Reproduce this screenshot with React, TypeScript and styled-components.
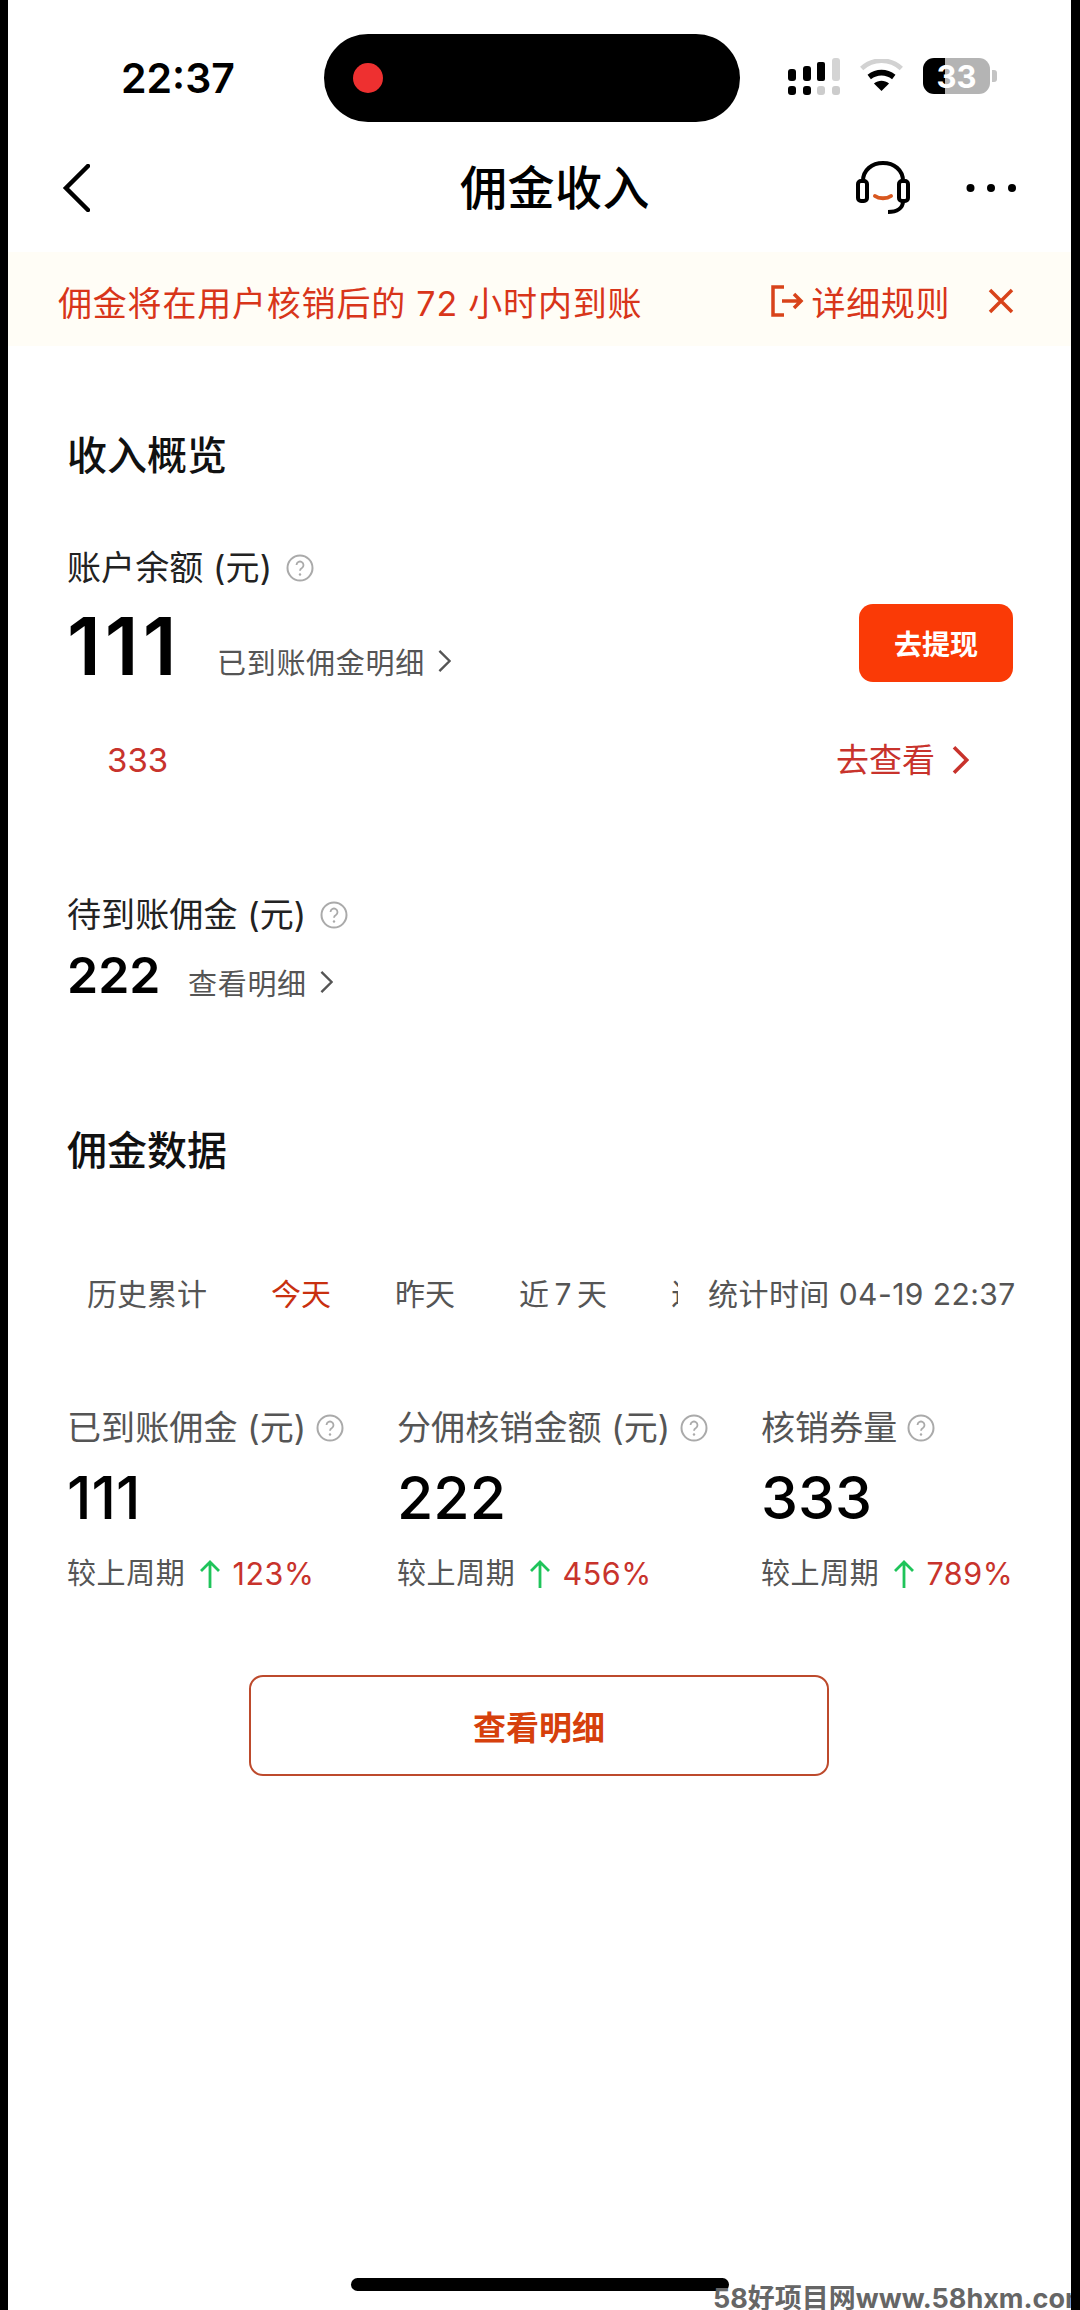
import React from 'react'
import styled, { createGlobalStyle } from 'styled-components'

const FONT = `Inter, "Noto Sans CJK SC", sans-serif`

const GlobalStyle = createGlobalStyle`
  html, body {
    margin: 0;
    padding: 0;
    background: #000;
  }
  body {
    font-family: ${FONT};
  }
`

const Phone = styled.div`
  position: relative;
  box-sizing: border-box;
  width: 1063px;
  height: 2310px;
  margin-left: 8px;
  background: #fff;
  overflow: hidden;
`

const StatusBar = styled.div`
  display: flex;
  align-items: center;
  height: 88px;
  padding: 34px 0 0 113px;
`

const Clock = styled.div`
  width: 203px;
  font-size: 41px;
  font-weight: 600;
  color: #000;
`

const Island = styled.div`
  display: flex;
  align-items: center;
  box-sizing: border-box;
  width: 416px;
  height: 88px;
  padding-left: 29px;
  border-radius: 44px;
  background: #000;
`

const RecordDot = styled.span`
  width: 30px;
  height: 30px;
  border-radius: 50%;
  background: #ee3030;
`

const StatusIcons = styled.div`
  display: flex;
  align-items: center;
  margin: -4px 0 0 48px;
  gap: 19px;
`

const Battery = styled.div`
  display: flex;
  align-items: center;
  justify-content: center;
  width: 67px;
  height: 36px;
  border-radius: 11px;
  background: linear-gradient(90deg, #000 33%, #b4b4b4 33%);
  color: #fff;
  font-size: 31px;
  font-weight: 700;
`

const BatteryTip = styled.span`
  width: 5px;
  height: 12px;
  margin-left: -17px;
  border-radius: 0 3px 3px 0;
  background: #c4c4c4;
`

const NavBar = styled.div`
  display: grid;
  grid-template-columns: 398px auto 1fr;
  align-items: center;
  height: 100px;
  margin-top: 16px;
  padding: 0 55px 0 54px;
`

const NavTitle = styled.div`
  font-size: 47px;
  font-weight: 500;
  line-height: 96px;
  letter-spacing: 0.5px;
  color: #000;
`

const NavActions = styled.div`
  display: flex;
  justify-content: flex-end;
  align-items: center;
  gap: 55px;
`

const Notice = styled.div`
  display: flex;
  align-items: center;
  box-sizing: border-box;
  height: 94px;
  margin-top: 14px;
  padding: 4px 57px 0 50px;
  background: #fffdf6;
  color: #d8351a;
  font-size: 34px;
`

const NoticeText = styled.div`
  flex: 1;
  letter-spacing: 0.8px;
`

const RuleLink = styled.div`
  display: flex;
  align-items: center;
  gap: 8px;
  margin-right: 38px;
  letter-spacing: 0.6px;
`

const Body = styled.div`
  padding: 0 58px 0 59px;
`

const SectionTitle = styled.h2<{ $top: number }>`
  margin: ${({ $top }) => $top}px 0 0;
  font-size: 40px;
  font-weight: 500;
  line-height: 56px;
  color: #111;
`

const LabelRow = styled.div<{ $top: number }>`
  display: flex;
  align-items: center;
  gap: 14px;
  margin-top: ${({ $top }) => $top}px;
  font-size: 34px;
  line-height: 46px;
  letter-spacing: 0.1px;
  color: #222;
`

const BalanceRow = styled.div`
  display: flex;
  align-items: center;
  height: 86px;
  margin-top: 11px;
`

const BigAmount = styled.div`
  width: 150px;
  font-size: 80px;
  font-weight: 600;
  letter-spacing: 4px;
  color: #000;
`

const SubLink = styled.div<{ $top: number }>`
  display: flex;
  align-items: center;
  gap: 12px;
  margin-top: ${({ $top }) => $top}px;
  font-size: 29px;
  letter-spacing: 0.7px;
  color: #555;
`

const WithdrawButton = styled.button`
  width: 154px;
  height: 78px;
  margin: -4px 0 0 auto;
  border: 0;
  border-radius: 14px;
  background: #fa3a06;
  color: #fff;
  font-family: ${FONT};
  font-size: 28px;
  font-weight: 700;
`

const RewardRow = styled.div`
  display: flex;
  align-items: center;
  justify-content: space-between;
  margin-top: 49px;
  padding: 0 44px 0 40px;
  color: #c8332c;
  font-size: 33px;
  line-height: 46px;
`

const RewardLink = styled.div`
  display: flex;
  align-items: center;
  gap: 16px;
`

const PendingRow = styled.div`
  display: flex;
  align-items: center;
  height: 60px;
  margin-top: 7px;
`

const MidAmount = styled.div`
  width: 121px;
  font-size: 50px;
  font-weight: 600;
  color: #000;
`

const TabsRow = styled.div`
  display: flex;
  align-items: center;
  height: 50px;
  margin-top: 88px;
  font-size: 30px;
  color: #555;
`

const TabStrip = styled.div`
  flex: none;
  display: flex;
  box-sizing: border-box;
  width: 611px;
  padding-left: 20px;
  overflow: hidden;
  white-space: nowrap;
  gap: 64px;
`

const Tab = styled.span<{ $active?: boolean }>`
  flex: none;
  color: ${({ $active }) => ($active ? '#c8300f' : '#555')};
`

const StatTime = styled.div`
  flex: none;
  margin-left: 30px;
  letter-spacing: 0.45px;
  white-space: nowrap;
`

const StatsGrid = styled.div`
  display: grid;
  grid-template-columns: 330px 364px 1fr;
  margin-top: 88px;
`

const StatLabel = styled.div`
  display: flex;
  align-items: center;
  gap: 10px;
  font-size: 34px;
  line-height: 46px;
  letter-spacing: 0.1px;
  color: #555;
  white-space: nowrap;
`

const StatValue = styled.div`
  margin-top: 9px;
  font-size: 59px;
  line-height: 76px;
  font-weight: 500;
  color: #000;
`

const Compare = styled.div`
  display: flex;
  align-items: center;
  gap: 14px;
  margin-top: 16px;
  font-size: 29px;
  line-height: 44px;
  letter-spacing: 0.6px;
  color: #555;
  white-space: nowrap;
`

const Delta = styled.span`
  margin-left: -3px;
  color: #c8332c;
  font-size: 30.5px;
`

const DetailButton = styled.button`
  display: block;
  width: 580px;
  height: 101px;
  margin: 79px 0 0 182px;
  border: 2px solid #bd4a2c;
  border-radius: 14px;
  background: #fff;
  color: #d6400c;
  font-family: ${FONT};
  font-size: 33px;
  font-weight: 700;
`

const HomeBar = styled.div`
  position: absolute;
  left: 343px;
  bottom: 19px;
  width: 378px;
  height: 13px;
  border-radius: 7px;
  background: #000;
`

const Watermark = styled.div`
  position: absolute;
  left: 705px;
  bottom: -5px;
  white-space: nowrap;
  font-size: 27px;
  line-height: 32px;
  font-weight: 700;
  color: #666;
`

const Help = () => (
  <svg width="28" height="28" viewBox="0 0 28 28" fill="none">
    <circle cx="14" cy="14" r="12.5" stroke="#aaa" strokeWidth="2" />
    <path d="M10.5 11a3.5 3.5 0 1 1 5.4 3c-1.3.8-1.9 1.400-1.900 2.800" stroke="#aaa" strokeWidth="1.800" />
    <circle cx="14" cy="20.500" r="1.200" fill="#aaa" />
  </svg>
)

const Chevron = ({ size, color, width = 2 }: { size: number; color: string; width?: number }) => (
  <svg width={size * 0.6} height={size} viewBox="0 0 12 20" fill="none">
    <path d="M2 1.500 10.500 10 2 18.500" stroke={color} strokeWidth={width} />
  </svg>
)

const UpArrow = () => (
  <svg width="22" height="30" viewBox="0 0 22 30" fill="none">
    <path d="M11 29V3M2 12l9-9 9 9" stroke="#1fc45a" strokeWidth="2.800" />
  </svg>
)

const stats = [
  { label: '已到账佣金 (元)', value: '111', delta: '123%' },
  { label: '分佣核销金额 (元)', value: '222', delta: '456%' },
  { label: '核销券量', value: '333', delta: '789%' },
]

const tabs = ['历史累计', '今天', '昨天', '近\u20097\u2009天', '近30天']

export default function App() {
  return (
    <>
      <GlobalStyle />
      <Phone>
        <StatusBar>
          <Clock>22:37</Clock>
          <Island>
            <RecordDot />
          </Island>
          <StatusIcons>
            <svg width="52" height="37" viewBox="0 0 52 37">
              <rect x="0" y="11" width="8" height="12" rx="3" fill="#000" />
              <rect x="15" y="8" width="8" height="15" rx="3" fill="#000" />
              <rect x="29" y="4" width="8" height="19" rx="2" fill="#000" />
              <rect x="44" y="0" width="8" height="23" rx="3" fill="#d4d4d4" />
              <rect x="0" y="28" width="8" height="9" rx="3" fill="#000" />
              <rect x="15" y="28" width="8" height="9" rx="3" fill="#000" />
              <rect x="29" y="28" width="8" height="9" rx="3" fill="#ccc" />
              <rect x="44" y="28" width="8" height="9" rx="3" fill="#ccc" />
            </svg>
            <svg width="45" height="34" viewBox="0 0 46 36" fill="none">
              <path d="M2 10C14-1 32-1 44 10" stroke="#d2d2d2" strokeWidth="5" />
              <path d="M10 19c8-6 18-6 26 0" stroke="#000" strokeWidth="6" />
              <path d="M15 26c5-4 11-4 16 0l-8 8z" fill="#000" />
            </svg>
            <Battery>33</Battery>
            <BatteryTip />
          </StatusIcons>
        </StatusBar>
        <NavBar>
          <svg width="28" height="48" viewBox="0 0 28 48" fill="none">
            <path d="M26 2 4 24l22 22" stroke="#000" strokeWidth="4.500" strokeLinecap="round" />
          </svg>
          <NavTitle>佣金收入</NavTitle>
          <NavActions>
            <svg width="56" height="54" viewBox="0 0 56 54" fill="none">
              <path d="M8 20C8 9 17 2 28 2s20 7 20 18" stroke="#000" strokeWidth="4" />
              <rect x="3" y="20" width="9" height="20" rx="3" stroke="#000" strokeWidth="4" />
              <rect x="44" y="20" width="9" height="20" rx="3" stroke="#000" strokeWidth="4" />
              <path d="M48 40c0 7-6 11-15 11" stroke="#000" strokeWidth="4" />
              <path d="M20 35c4 3 12 3 16 0" stroke="#d8571f" strokeWidth="4" strokeLinecap="round" />
            </svg>
            <svg width="50" height="10" viewBox="0 0 50 10">
              <circle cx="4.500" cy="5" r="4" fill="#000" />
              <circle cx="25" cy="5" r="4" fill="#000" />
              <circle cx="46" cy="5" r="4" fill="#000" />
            </svg>
          </NavActions>
        </NavBar>
        <Notice>
          <NoticeText>佣金将在用户核销后的 72 小时内到账</NoticeText>
          <RuleLink>
            <svg width="34" height="34" viewBox="0 0 34 34" fill="none">
              <path d="M14 3H3v28h11M12 17h19M24 10l7 7-7 7" stroke="#d8431a" strokeWidth="3.500" />
            </svg>
            详细规则
          </RuleLink>
          <svg width="26" height="26" viewBox="0 0 26 26" fill="none">
            <path d="M2 2l22 22M24 2 2 24" stroke="#d8431a" strokeWidth="3.500" />
          </svg>
        </Notice>
        <Body>
          <SectionTitle $top={82}>收入概览</SectionTitle>
          <LabelRow $top={61}>
            账户余额 (元)
            <Help />
          </LabelRow>
          <BalanceRow>
            <BigAmount>111</BigAmount>
            <SubLink $top={32}>
              已到账佣金明细
              <Chevron size={24} color="#555" />
            </SubLink>
            <WithdrawButton>去提现</WithdrawButton>
          </BalanceRow>
          <RewardRow>
            333
            <RewardLink>
              去查看
              <Chevron size={30} color="#c8332c" width={2.400} />
            </RewardLink>
          </RewardRow>
          <LabelRow $top={109}>
            待到账佣金 (元)
            <Help />
          </LabelRow>
          <PendingRow>
            <MidAmount>222</MidAmount>
            <SubLink $top={14}>
              查看明细
              <Chevron size={24} color="#555" />
            </SubLink>
          </PendingRow>
          <SectionTitle $top={118}>佣金数据</SectionTitle>
          <TabsRow>
            <TabStrip>
              {tabs.map((t) => (
                <Tab key={t} $active={t === '今天'}>
                  {t}
                </Tab>
              ))}
            </TabStrip>
            <StatTime>统计时间 04-19 22:37</StatTime>
          </TabsRow>
          <StatsGrid>
            {stats.map((s) => (
              <div key={s.label}>
                <StatLabel>
                  {s.label}
                  <Help />
                </StatLabel>
                <StatValue>{s.value}</StatValue>
                <Compare>
                  较上周期
                  <UpArrow />
                  <Delta>{s.delta}</Delta>
                </Compare>
              </div>
            ))}
          </StatsGrid>
          <DetailButton>查看明细</DetailButton>
        </Body>
        <HomeBar />
        <Watermark>58好项目网www.58hxm.com</Watermark>
      </Phone>
    </>
  )
}
